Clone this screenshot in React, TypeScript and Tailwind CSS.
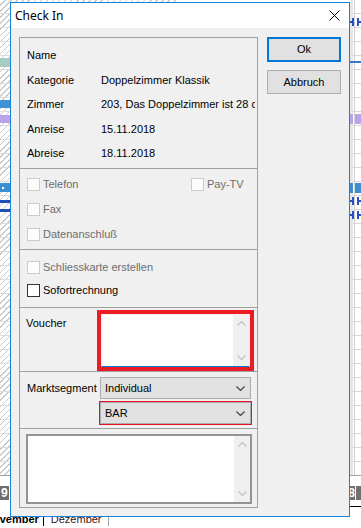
import { ReactNode } from "react";

function Chevron({ up, color }: { up?: boolean; color: string }) {
  return (
    <svg width="9" height="5" viewBox="0 0 9 5" className="block">
      <polyline
        points={up ? "0.5,4.5 4.5,0.5 8.5,4.5" : "0.5,0.5 4.5,4.5 8.5,0.5"}
        fill="none"
        stroke={color}
        strokeWidth="1.2"
      />
    </svg>
  );
}

function ScrollBar() {
  return (
    <div className="w-[16px] h-full bg-[#f0f0f0] flex flex-col justify-between items-center py-[6px]">
      <Chevron up color="#c2c2c2" />
      <Chevron color="#c2c2c2" />
    </div>
  );
}

function Check({ label, disabled }: { label: string; disabled?: boolean }) {
  return (
    <div className="flex items-center h-[13px] gap-[3px]">
      <div
        className={
          disabled
            ? "w-[13px] h-[13px] border border-[#cccccc] bg-[#fcfcfc]"
            : "w-[13px] h-[13px] border border-[#333333] bg-white"
        }
      />
      <span className={disabled ? "text-[#6d6d6d] leading-[13px]" : "text-black leading-[13px]"}>{label}</span>
    </div>
  );
}

function InfoRow({ label, value }: { label: string; value?: string }) {
  return (
    <div className="flex leading-[13px] h-[13px]">
      <span className="w-[74px]">{label}</span>
      <span className="whitespace-nowrap overflow-hidden w-[154px]">{value}</span>
    </div>
  );
}

function Combo({ children }: { children: ReactNode }) {
  return (
    <div className="w-[151px] h-[22px] border border-[#adadad] bg-[#e1e1e1] flex items-center justify-between pl-[4px] pr-[5px]">
      <span className="leading-[13px]">{children}</span>
      <Chevron color="#444444" />
    </div>
  );
}

function BookingMarks() {
  return (
    <div className="flex gap-[3px] h-[8px]">
      <div className="flex items-center">
        <div className="w-[2px] h-[2px] bg-[#2650c4]" />
        <div className="w-[2px] h-[8px] bg-[#2650c4]" />
      </div>
      <div className="flex items-center">
        <div className="w-[2px] h-[8px] bg-[#2650c4]" />
        <div className="w-[2px] h-[2px] bg-[#2650c4]" />
      </div>
    </div>
  );
}

function Background() {
  return (
    <div className="flex flex-col h-full">
      <div className="relative h-[476px] flex border-b border-[#a0a0a0]">
        <div className="relative w-[180px] h-full bg-[repeating-linear-gradient(135deg,#ffffff_0px,#ffffff_3.3px,#c9c9c9_3.3px,#c9c9c9_4.3px)]">
          <div className="absolute inset-0 bg-[repeating-linear-gradient(180deg,transparent_0px,transparent_13px,#dcdcdc_13px,#dcdcdc_14px)]" />
          <div className="absolute left-0 top-[58px] w-[10px] h-[9px] bg-[#a7ccc4]" />
          <div className="absolute left-0 top-[100px] w-[10px] h-[8px] bg-[#3d93d4]" />
          <div className="absolute left-0 top-[115px] w-[10px] h-[8px] bg-[#b9a3ea]" />
          <div className="absolute left-0 top-[183px] w-[10px] h-[9px] bg-[#3c8fd0]" />
          <div className="absolute left-[2px] top-[187px] w-[2px] h-[2px] bg-white" />
          <div className="absolute left-0 top-[200px] w-[10px] h-[3px] bg-[#1f4fb8]" />
          <div className="absolute left-0 top-[209px] w-[10px] h-[3px] bg-[#1f4fb8]" />
        </div>
        <div className="relative flex-1 h-full bg-white">
          <div className="absolute inset-0 bg-[repeating-linear-gradient(180deg,transparent_0px,transparent_13px,#d6d6d6_13px,#d6d6d6_14px)]" />
          <div className="absolute right-[6px] top-0 w-px h-full bg-[#d0d0d0]" />
          <div className="absolute right-[8px] top-0 w-[3px] h-full bg-[#e6e6e6]" />
          <div className="absolute right-0 top-[18px]">
            <BookingMarks />
          </div>
          <div className="absolute right-0 top-[61px] w-[11px] h-[2px] bg-[#3a78c8]" />
          <div className="absolute right-[8px] top-[114px] w-[3px] h-[10px] bg-[#b9a3ea]" />
          <div className="absolute right-0 top-[114px] w-[6px] h-[10px] bg-[#b9a3ea]" />
          <div className="absolute right-[8px] top-[183px] w-[3px] h-[10px] bg-[#3c8fd0]" />
          <div className="absolute right-0 top-[183px] w-[6px] h-[10px] bg-[#3c8fd0]" />
          <div className="absolute right-0 top-[197px]">
            <BookingMarks />
          </div>
          <div className="absolute right-0 top-[211px]">
            <BookingMarks />
          </div>
        </div>
      </div>
      <div className="h-[10px] bg-white" />
      <div className="h-[14px] flex justify-between bg-white">
        <div className="w-[9px] bg-[#6f6f6f] text-white font-bold text-[12px] leading-[14px] pl-[1px]">9</div>
        <div className="flex gap-px">
          <div className="w-[8px] bg-[#6f6f6f] text-white font-bold text-[12px] leading-[14px] text-right">8</div>
          <div className="w-[5px] bg-[#6f6f6f]" />
        </div>
      </div>
      <div className="h-[7px] bg-white flex justify-end items-end">
        <div className="w-[30px] h-px bg-black" />
      </div>
      <div className="flex-1 bg-white flex items-start pt-[6px] text-[11px] leading-[13px]">
        <span className="-ml-[15px] font-bold text-black pr-[4px] border-r border-black">November</span>
        <span className="pl-[7px] pr-[6px] text-[#3b1414] border-r border-[#a0a0a0]">Dezember</span>
      </div>
    </div>
  );
}

export default function App() {
  return (
    <div className="relative w-[361px] h-[528px] overflow-hidden bg-white font-['Liberation_Sans',Arial,sans-serif] text-[11px] text-black">
      <Background />

      <div className="absolute left-[10px] top-[2px] w-[340px] h-[515px] border border-[#1883d7] flex flex-col">
        <div className="h-[25px] bg-white flex items-center justify-between pl-[4px] pr-[9px]">
          <span className="font-['Noto_Sans',sans-serif] text-[12px] leading-[16px]">Check In</span>
          <svg width="11" height="11" viewBox="0 0 11 11" className="block">
            <path d="M0.5 0.5 L10.5 10.5 M10.5 0.5 L0.5 10.5" stroke="#000" strokeWidth="1" />
          </svg>
        </div>

        <div className="flex-1 bg-[#f0f0f0] flex px-[8px] pt-[9px] pb-[8px] gap-[9px]">
          <div className="w-[239px] border border-[#a0a0a0] flex flex-col">
            <div className="flex flex-col gap-[11.5px] pl-[7px] pt-[11px] pb-[8px] border-b border-[#a0a0a0]">
              <InfoRow label="Name" />
              <InfoRow label="Kategorie" value="Doppelzimmer Klassik" />
              <InfoRow label="Zimmer" value="203, Das Doppelzimmer ist 28 qm" />
              <InfoRow label="Anreise" value="15.11.2018" />
              <InfoRow label="Abreise" value="18.11.2018" />
            </div>

            <div className="flex flex-col gap-[12px] pl-[7px] pt-[9px] pb-[8px] border-b border-[#a0a0a0]">
              <div className="flex">
                <div className="w-[164px]">
                  <Check label="Telefon" disabled />
                </div>
                <Check label="Pay-TV" disabled />
              </div>
              <Check label="Fax" disabled />
              <Check label="Datenanschluß" disabled />
            </div>

            <div className="flex flex-col gap-[10px] pl-[7px] pt-[11px] pb-[10px] border-b border-[#a0a0a0]">
              <Check label="Schliesskarte erstellen" disabled />
              <Check label="Sofortrechnung" />
            </div>

            <div className="flex items-start pl-[6px] pt-[2px] border-b border-[#a0a0a0]">
              <span className="w-[71px] pt-[7px] leading-[13px]">Voucher</span>
              <div className="w-[157px] h-[61px] border-4 border-[#ed1c24]">
                <div className="h-full flex bg-white border border-[#f0f0f0] border-b-[#0078d7]">
                  <div className="flex-1" />
                  <ScrollBar />
                </div>
              </div>
            </div>

            <div className="flex flex-col gap-[2px] pl-[7px] pt-[5px] pb-[3px] border-b border-[#a0a0a0]">
              <div className="flex items-center">
                <span className="w-[73px] leading-[13px]">Marktsegment</span>
                <Combo>Individual</Combo>
              </div>
              <div className="flex pl-[72px]">
                <div className="border border-[#e81123]">
                  <Combo>BAR</Combo>
                </div>
              </div>
            </div>

            <div className="flex-1 pl-[6px] pt-[5px]">
              <div className="w-[226px] h-[70px] border-2 border-[#939393] bg-white flex justify-end">
                <ScrollBar />
              </div>
            </div>
          </div>

          <div className="w-[74px] flex flex-col gap-[8px]">
            <button className="h-[25px] border-2 border-[#0078d7] bg-[#e1e1e1] text-[11px] leading-[13px]">Ok</button>
            <button className="h-[24px] border border-[#adadad] bg-[#e1e1e1] text-[11px] leading-[13px]">Abbruch</button>
          </div>
        </div>
      </div>
    </div>
  );
}
